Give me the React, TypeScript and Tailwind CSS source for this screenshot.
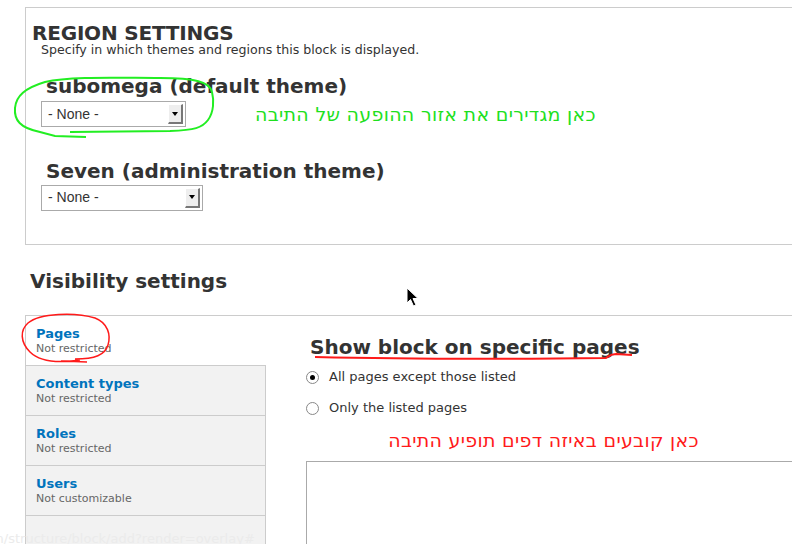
import React from 'react';

function Select({ width }: { width: string }) {
  return (
    <div className={`flex items-center h-[26px] ${width} border border-[#aaa] bg-white pl-[6px] pr-[2px]`}>
      <span className="flex-1 font-['Liberation_Sans',Arial,sans-serif] text-[14px] text-[#333]">- None -</span>
      <span className="flex items-center justify-center w-[15px] h-[20px] bg-[#eee] border-t border-l border-white border-r-2 border-b-2 border-r-[#777] border-b-[#777]">
        <span className="w-0 h-0 border-l-[3px] border-r-[3px] border-t-[4px] border-l-transparent border-r-transparent border-t-black" />
      </span>
    </div>
  );
}

function Radio({ checked, label }: { checked?: boolean; label: string }) {
  return (
    <label className="flex items-center gap-[10px] text-[13px] text-[#333] h-[20px]">
      <span className="flex items-center justify-center w-[13px] h-[13px] rounded-full border border-[#888] bg-white">
        {checked && <span className="w-[5px] h-[5px] rounded-full bg-black" />}
      </span>
      {label}
    </label>
  );
}

const tabs = [
  { title: 'Content types', sub: 'Not restricted' },
  { title: 'Roles', sub: 'Not restricted' },
  { title: 'Users', sub: 'Not customizable' },
];

export default function App() {
  return (
    <div className="relative w-[792px] h-[544px] overflow-hidden bg-white font-['DejaVu_Sans',sans-serif] text-[#333]">
      {/* region settings fieldset */}
      <div className="mt-[7px] ml-[25px] w-[800px] h-[238px] border border-[#ccc] pl-[6px] pt-[15px]">
        <h2 className="text-[20px] font-bold leading-[20px] text-[#333] tracking-[-0.2px]">REGION SETTINGS</h2>
        <p className="ml-[9px] text-[12.6px] leading-[14px] text-[#333]">
          Specify in which themes and regions this block is displayed.
        </p>
        <div className="ml-[9px] mt-[17px]">
          <h3 className="ml-[5px] text-[20px] font-bold leading-[24px]">subomega (default theme)</h3>
          <div className="flex items-center mt-[2px]">
            <Select width="w-[145px]" />
            <span dir="rtl" className="ml-[69px] text-[19px] text-[#1ee01e] tracking-[0.3px]">
              כאן מגדירים את אזור ההופעה של התיבה
            </span>
          </div>
          <h3 className="ml-[5px] mt-[30px] text-[20px] font-bold leading-[24px]">Seven (administration theme)</h3>
          <div className="mt-[2px]">
            <Select width="w-[162px]" />
          </div>
        </div>
      </div>

      {/* visibility settings */}
      <h2 className="ml-[30px] mt-[24px] text-[20px] font-bold leading-[24px]">Visibility settings</h2>
      <div className="flex ml-[25px] mt-[22px] w-[800px] h-[240px] border-t border-l border-[#ccc]">
        <ul className="w-[240px] shrink-0 flex flex-col">
          <li className="h-[49px] pl-[10px] pt-[9px] bg-white">
            <div className="text-[13px] font-bold text-[#0074bd] leading-[17px]">Pages</div>
            <div className="text-[11px] text-[#666] leading-[14px]">Not restricted</div>
          </li>
          {tabs.map((t) => (
            <li key={t.title} className="h-[50px] pl-[10px] pt-[9px] bg-[#f2f2f2] border-t border-r border-[#ccc]">
              <div className="text-[13px] font-bold text-[#0074bd] leading-[17px]">{t.title}</div>
              <div className="text-[11px] text-[#666] leading-[14px]">{t.sub}</div>
            </li>
          ))}
          <li className="flex-1 bg-[#f2f2f2] border-t border-r border-[#ccc]" />
        </ul>
        <div className="flex-1 pl-[40px] pt-[19px]">
          <h3 className="ml-[4px] text-[20px] font-bold leading-[24px]">Show block on specific pages</h3>
          <div className="mt-[8px] flex flex-col gap-[11px]">
            <Radio checked label="All pages except those listed" />
            <Radio label="Only the listed pages" />
          </div>
          <div dir="rtl" className="w-[475px] mt-[10px] text-center text-[19px] leading-[24px] text-[#ff1a1a] tracking-[0.3px]">
            כאן קובעים באיזה דפים תופיע התיבה
          </div>
          <div className="mt-[9px] h-[120px] border-t border-l border-[#aaa]" />
        </div>
      </div>

      {/* status bar url */}
      <div className="absolute left-[-8px] top-[529px] text-[13px] text-[#ebebeb] whitespace-nowrap">
        in/structure/block/add?render=overlay#
      </div>

      {/* hand-drawn annotations and cursor */}
      <svg className="absolute inset-0 pointer-events-none" width="792" height="544" viewBox="0 0 792 544">
        <path
          d="M86 137 L55 136 L40 132 C20 128 14 120 15 108 C16 96 25 88 45 82 C70 76 120 78 160 78 C195 78 210 82 212 92 C214 100 214 112 208 120 C202 128 195 130 170 131 L70 132"
          fill="none"
          stroke="#22ee22"
          strokeWidth="2"
        />
        <path
          d="M61 361 L87 362 M80 360 C60 363 40 362 30 352 C20 342 20 330 28 323 C40 313 75 312 95 318 C108 323 111 335 108 345 C105 355 95 359 75 359"
          fill="none"
          stroke="#ff1a1a"
          strokeWidth="1.5"
        />
        <path
          d="M315 357 C400 359 520 359 606 358 C609 356 611 354 616 354 L632 355"
          fill="none"
          stroke="#ff1a1a"
          strokeWidth="2"
        />
        <path
          d="M407 288 L407 303 L410.5 299.5 L413.5 306 L416 305 L413 298.5 L418 298.5 Z"
          fill="#000"
          stroke="#fff"
          strokeWidth="1"
        />
      </svg>
    </div>
  );
}
